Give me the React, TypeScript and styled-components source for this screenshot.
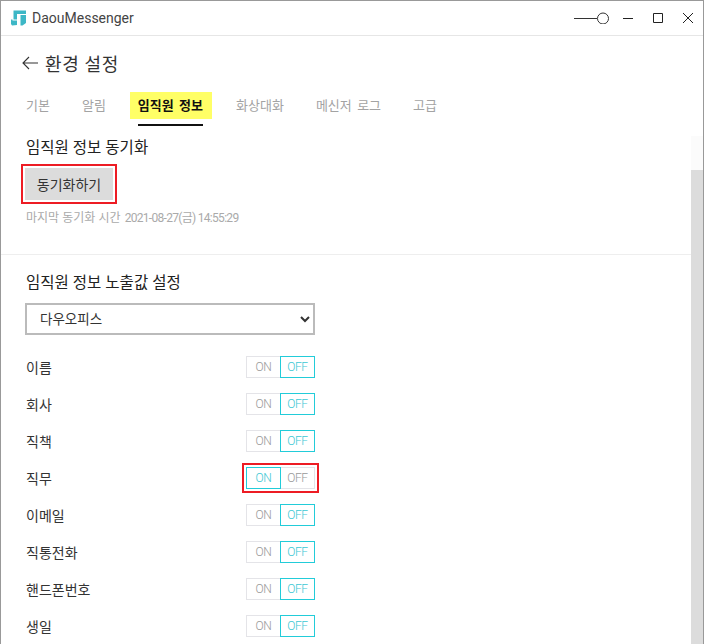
import React from 'react';
import styled, { createGlobalStyle } from 'styled-components';

const GlobalStyle = createGlobalStyle`
  html, body {
    margin: 0;
    padding: 0;
    background: #fff;
  }
  * {
    box-sizing: border-box;
  }
`;

const fontStack = `'Noto Sans', 'Noto Sans CJK KR', sans-serif`;

const tabs = ['기본', '알림', '임직원 정보', '화상대화', '메신저 로그', '고급'];

const fields = [
  { label: '이름', on: false },
  { label: '회사', on: false },
  { label: '직책', on: false },
  { label: '직무', on: true, marked: true },
  { label: '이메일', on: false },
  { label: '직통전화', on: false },
  { label: '핸드폰번호', on: false },
  { label: '생일', on: false },
];

const Window = styled.div`
  width: 704px;
  height: 644px;
  overflow: hidden;
  border: 1px solid #999;
  border-bottom: none;
  display: flex;
  flex-direction: column;
  font-family: ${fontStack};
  color: #333;
  background: #fff;
`;

const TitleBar = styled.div`
  flex: none;
  height: 35px;
  display: flex;
  align-items: center;
  padding-left: 10px;
  border-bottom: 1px solid #e6e6e6;
`;

const AppName = styled.span`
  margin-left: 6px;
  font-family: Roboto, sans-serif;
  font-size: 14px;
  color: #444;
`;

const WindowButtons = styled.div`
  margin-left: auto;
  display: flex;
  align-items: center;
`;

const ControlSlot = styled.div`
  width: 30px;
  display: flex;
  justify-content: center;
`;

const SliderSlot = styled.div`
  display: flex;
  margin-right: 4px;
`;

const PageHeader = styled.div`
  flex: none;
  display: flex;
  align-items: center;
  gap: 6px;
  padding-left: 21px;
  height: 54px;
`;

const PageTitle = styled.h1`
  margin: 0;
  font-size: 18px;
  font-weight: 400;
  color: #333;
  letter-spacing: 0.6px;
`;

const TabBar = styled.div`
  flex: none;
  display: flex;
  align-items: flex-start;
  gap: 32px;
  padding-left: 25px;
  height: 46px;
`;

const Tab = styled.div<{ $active?: boolean }>`
  position: relative;
  margin-top: 2px;
  height: 27px;
  line-height: 27px;
  font-size: 13px;
  word-spacing: 2px;
  color: ${(p) => (p.$active ? '#111' : '#a3a3a3')};
  font-weight: ${(p) => (p.$active ? 700 : 400)};
  ${(p) =>
    p.$active &&
    `
    background: #ffff66;
    padding: 0 9px 0 8px;
    margin-left: -8px;
    margin-right: -8px;
    &::after {
      content: '';
      position: absolute;
      left: 8px;
      right: 9px;
      bottom: -7px;
      height: 2px;
      background: #111;
    }
  `}
`;

const Body = styled.div`
  flex: 1;
  min-height: 0;
  display: flex;
`;

const Content = styled.div`
  flex: 1;
  min-width: 0;
  overflow: hidden;
`;

const Section = styled.section<{ $divided?: boolean }>`
  padding: ${(p) => (p.$divided ? '17px 24px 0' : '1px 24px 0')};
  ${(p) => p.$divided && 'border-top: 1px solid #eee;'}
`;

const SectionTitle = styled.h2`
  margin: 0;
  padding-left: 1px;
  font-size: 15.5px;
  line-height: 20px;
  font-weight: 400;
  color: #222;
`;

const SyncButton = styled.button`
  display: block;
  margin-top: 11px;
  width: 88px;
  height: 32px;
  border: none;
  padding: 0;
  background: #dcdcdc;
  outline: 2px solid #ed1c24;
  outline-offset: 2px;
  font-family: inherit;
  font-size: 14px;
  color: #333;
`;

const SyncTime = styled.p`
  margin: 10px 0 0;
  padding-left: 1px;
  height: 44px;
  font-size: 12px;
  line-height: 16px;
  color: #aaa;
`;

const SyncDate = styled.span`
  margin-left: 1px;
  font-family: Roboto, 'Noto Sans CJK KR', sans-serif;
  letter-spacing: -0.7px;
`;

const Select = styled.select`
  display: block;
  margin-top: 11px;
  width: 290px;
  height: 32px;
  padding: 0 9px;
  border: 2px solid #bbb;
  border-radius: 0;
  background: #fff;
  font-family: inherit;
  font-size: 13.5px;
  color: #333;
`;

const FieldList = styled.div`
  margin-top: 13px;
  width: 290px;
`;

const FieldRow = styled.div`
  height: 37px;
  padding-left: 1px;
  display: flex;
  align-items: center;
  justify-content: space-between;
  font-size: 14px;
  color: #333;
`;

const Toggle = styled.div<{ $marked?: boolean }>`
  display: flex;
  width: 69px;
  height: 22px;
  ${(p) =>
    p.$marked &&
    `
    outline: 2px solid #ed1c24;
    outline-offset: 2px;
  `}
`;

const ToggleCell = styled.div<{ $selected: boolean; $side: 'left' | 'right' }>`
  flex: 1;
  display: flex;
  align-items: center;
  justify-content: center;
  padding-top: 1px;
  font-family: Roboto, sans-serif;
  font-size: 12px;
  font-weight: 300;
  letter-spacing: -0.4px;
  border: 1px solid ${(p) => (p.$selected ? '#22ccd9' : '#e4e4e8')};
  ${(p) => !p.$selected && (p.$side === 'left' ? 'border-right: none;' : 'border-left: none;')}
  color: ${(p) => (p.$selected ? '#3cc8d4' : '#999')};
`;

const ScrollTrack = styled.div`
  flex: none;
  width: 12px;
  background: #fbfbfb;
  display: flex;
  flex-direction: column;
`;

const ScrollThumb = styled.div`
  margin-top: 34px;
  flex: 1;
  background: #dcdcdc;
`;

const Logo = () => (
  <svg width="15" height="16" viewBox="0 0 15 16" fill="#3db7c6">
    <path d="M2.5 0.5h12.5v3.5H6v5.5H2.5z" />
    <path d="M0 9.5h1.5v1H6V15l-5 .5L0 14z" />
    <path d="M9.5 5H15v8l-3.5 2.5h-2z" />
  </svg>
);

const SliderIcon = () => (
  <svg width="35" height="12" viewBox="0 0 35 12" fill="none" stroke="#333" strokeWidth="1">
    <path d="M0 6.5h23" />
    <circle cx="29" cy="6.5" r="5.5" />
  </svg>
);

const ControlIcon = ({ d }: { d: string }) => (
  <svg width="10" height="10" viewBox="0 0 10 10" fill="none" stroke="#222" strokeWidth="1">
    <path d={d} />
  </svg>
);

const App = () => {
  return (
    <>
      <GlobalStyle />
      <Window>
        <TitleBar>
          <Logo />
          <AppName>DaouMessenger</AppName>
          <WindowButtons>
            <SliderSlot>
              <SliderIcon />
            </SliderSlot>
            <ControlSlot>
              <ControlIcon d="M0 5.5h10" />
            </ControlSlot>
            <ControlSlot>
              <ControlIcon d="M.5.5h9v9h-9z" />
            </ControlSlot>
            <ControlSlot>
              <ControlIcon d="M0 0l10 10M10 0L0 10" />
            </ControlSlot>
          </WindowButtons>
        </TitleBar>
        <PageHeader>
          <svg width="17" height="14" viewBox="0 0 17 14" fill="none" stroke="#333" strokeWidth="1.1">
            <path d="M16 7H1M7 1L1 7l6 6" />
          </svg>
          <PageTitle>환경 설정</PageTitle>
        </PageHeader>
        <TabBar>
          {tabs.map((t) => (
            <Tab key={t} $active={t === '임직원 정보'}>
              {t}
            </Tab>
          ))}
        </TabBar>
        <Body>
          <Content>
            <Section>
              <SectionTitle>임직원 정보 동기화</SectionTitle>
              <SyncButton>동기화하기</SyncButton>
              <SyncTime>
                마지막 동기화 시간 <SyncDate>2021-08-27(금) 14:55:29</SyncDate>
              </SyncTime>
            </Section>
            <Section $divided>
              <SectionTitle>임직원 정보 노출값 설정</SectionTitle>
              <Select defaultValue="다우오피스">
                <option>다우오피스</option>
              </Select>
              <FieldList>
                {fields.map((f) => (
                  <FieldRow key={f.label}>
                    {f.label}
                    <Toggle $marked={f.marked}>
                      <ToggleCell $selected={f.on} $side="left">
                        ON
                      </ToggleCell>
                      <ToggleCell $selected={!f.on} $side="right">
                        OFF
                      </ToggleCell>
                    </Toggle>
                  </FieldRow>
                ))}
              </FieldList>
            </Section>
          </Content>
          <ScrollTrack>
            <ScrollThumb />
          </ScrollTrack>
        </Body>
      </Window>
    </>
  );
};

export default App;
